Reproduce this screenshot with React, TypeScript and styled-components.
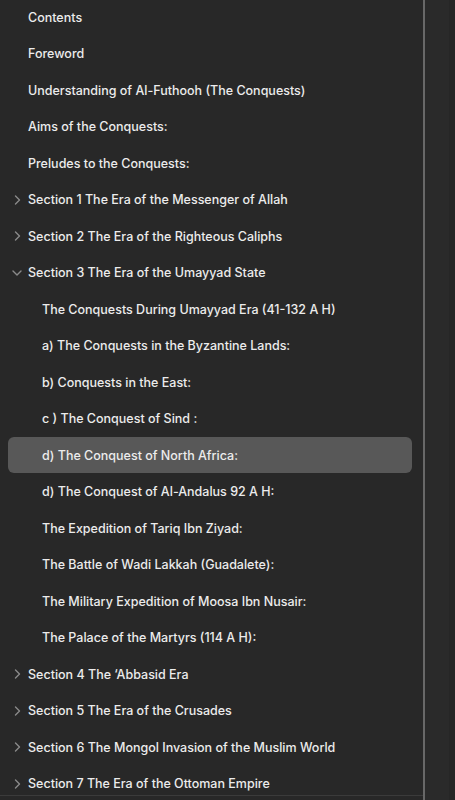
import React from "react";
import styled, { createGlobalStyle } from "styled-components";

const Global = createGlobalStyle`
  html, body { margin: 0; padding: 0; background: #282828; }
  body { font-family: Inter, "Liberation Sans", sans-serif; -webkit-font-smoothing: antialiased; }
`;

const Page = styled.div`
  display: flex;
  width: 455px;
  height: 800px;
  overflow: hidden;
  background: #282828;
`;

const Sidebar = styled.div`
  width: 423px;
  display: flex;
  flex-direction: column;
`;

const Scroll = styled.div`
  height: 795px;
  overflow: hidden;
  border-bottom: 1px solid #3b3b3b;
`;

const List = styled.ul`
  list-style: none;
  margin: -1.25px 0 0;
  padding: 0;
`;

const Row = styled.li<{ $active?: boolean; $depth: number }>`
  display: flex;
  align-items: center;
  height: 36.5px;
  margin: 0 11px 0 8px;
  padding-left: ${(p) => (p.$depth === 1 ? 34 : 20)}px;
  position: relative;
  border-radius: 6px;
  background: ${(p) => (p.$active ? "#585858" : "transparent")};
  color: #ececec;
  font-size: 12.5px;
  font-weight: 500;
  letter-spacing: 0;
  white-space: nowrap;
`;

const Chevron = styled.span<{ $open?: boolean }>`
  position: absolute;
  left: ${(p) => (p.$open ? 4 : 6)}px;
  top: 50%;
  transform: translateY(-50%);
  display: flex;
  color: #8a8a8a;
`;

const Divider = styled.div`
  width: 2px;
  background: #686868;
`;

const RightPane = styled.div`
  flex: 1;
  background: #2a2a2a;
  border-right: 6px solid #262626;
`;

type Item = { t: string; depth: number; chevron?: "right" | "down"; active?: boolean };

const items: Item[] = [
  { t: "Contents", depth: 0 },
  { t: "Foreword", depth: 0 },
  { t: "Understanding of Al-Futhooh (The Conquests)", depth: 0 },
  { t: "Aims of the Conquests:", depth: 0 },
  { t: "Preludes to the Conquests:", depth: 0 },
  { t: "Section 1 The Era of the Messenger of Allah", depth: 0, chevron: "right" },
  { t: "Section 2 The Era of the Righteous Caliphs", depth: 0, chevron: "right" },
  { t: "Section 3 The Era of the Umayyad State", depth: 0, chevron: "down" },
  { t: "The Conquests During Umayyad Era (41-132 A H)", depth: 1 },
  { t: "a) The Conquests in the Byzantine Lands:", depth: 1 },
  { t: "b) Conquests in the East:", depth: 1 },
  { t: "c ) The Conquest of Sind :", depth: 1 },
  { t: "d) The Conquest of North Africa:", depth: 1, active: true },
  { t: "d) The Conquest of Al-Andalus 92 A H:", depth: 1 },
  { t: "The Expedition of Tariq Ibn Ziyad:", depth: 1 },
  { t: "The Battle of Wadi Lakkah (Guadalete):", depth: 1 },
  { t: "The Military Expedition of Moosa Ibn Nusair:", depth: 1 },
  { t: "The Palace of the Martyrs (114 A H):", depth: 1 },
  { t: "Section 4 The \u2018Abbasid Era", depth: 0, chevron: "right" },
  { t: "Section 5 The Era of the Crusades", depth: 0, chevron: "right" },
  { t: "Section 6 The Mongol Invasion of the Muslim World", depth: 0, chevron: "right" },
  { t: "Section 7 The Era of the Ottoman Empire", depth: 0, chevron: "right" },
];

const RightIcon = () => (
  <svg width="7" height="10" viewBox="0 0 7 10" fill="none">
    <path d="M1.5 1 L5.5 5 L1.5 9" stroke="currentColor" strokeWidth="1.4" strokeLinecap="round" strokeLinejoin="round" />
  </svg>
);

const DownIcon = () => (
  <svg width="10" height="7" viewBox="0 0 10 7" fill="none">
    <path d="M1 1.5 L5 5.5 L9 1.5" stroke="currentColor" strokeWidth="1.4" strokeLinecap="round" strokeLinejoin="round" />
  </svg>
);

export default function App() {
  return (
    <>
      <Global />
      <Page>
        <Sidebar>
          <Scroll>
            <List>
              {items.map((it, i) => (
                <Row key={i} $depth={it.depth} $active={it.active}>
                  {it.chevron && (
                    <Chevron $open={it.chevron === "down"}>
                      {it.chevron === "down" ? <DownIcon /> : <RightIcon />}
                    </Chevron>
                  )}
                  {it.t}
                </Row>
              ))}
            </List>
          </Scroll>
        </Sidebar>
        <Divider />
        <RightPane />
      </Page>
    </>
  );
}
